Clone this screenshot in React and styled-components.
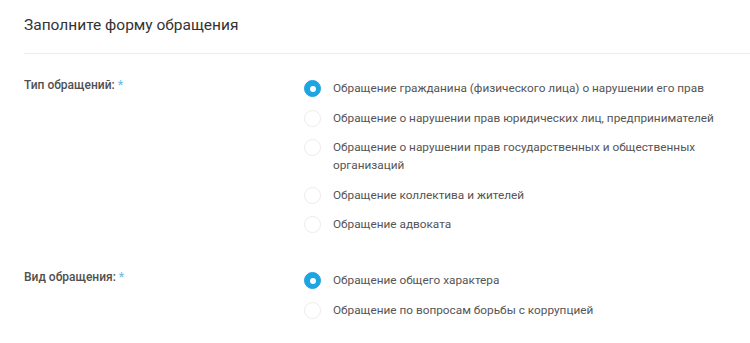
import React, { useState } from "react";
import styled, { createGlobalStyle } from "styled-components";

const GlobalStyle = createGlobalStyle`
  html, body {
    margin: 0;
    padding: 0;
    background: #fff;
  }
  body {
    font-family: Roboto, "Noto Sans", "Liberation Sans", sans-serif;
  }
`;

const groups = [
  {
    name: "type",
    label: "Тип обращений:",
    options: [
      "Обращение гражданина (физического лица) о нарушении его прав",
      "Обращение о нарушении прав юридических лиц, предпринимателей",
      "Обращение о нарушении прав государственных и общественных организаций",
      "Обращение коллектива и жителей",
      "Обращение адвоката",
    ],
  },
  {
    name: "kind",
    label: "Вид обращения:",
    options: [
      "Обращение общего характера",
      "Обращение по вопросам борьбы с коррупцией",
    ],
  },
];

export default function App() {
  const [values, setValues] = useState({ type: 0, kind: 0 });

  return (
    <>
      <GlobalStyle />
      <Page>
        <Header>
          <Title>Заполните форму обращения</Title>
        </Header>
        <Form>
          {groups.map((g) => (
            <Field key={g.name}>
              <Label>
                {g.label} <Required>*</Required>
              </Label>
              <Options>
                {g.options.map((opt, i) => (
                  <Option key={opt}>
                    <HiddenInput
                      type="radio"
                      name={g.name}
                      checked={values[g.name] === i}
                      onChange={() => setValues({ ...values, [g.name]: i })}
                    />
                    <Circle $checked={values[g.name] === i} />
                    <OptionText>{opt}</OptionText>
                  </Option>
                ))}
              </Options>
            </Field>
          ))}
        </Form>
      </Page>
    </>
  );
}

const Page = styled.div`
  width: 750px;
  padding-left: 24px;
  box-sizing: border-box;
`;

const Header = styled.div`
  height: 53px;
  border-bottom: 1px solid #ececec;
  display: flex;
  align-items: center;
`;

const Title = styled.h2`
  margin: 0 0 4px;
  font-size: 15.5px;
  font-weight: 400;
  color: #333;
`;

const Form = styled.div`
  display: flex;
  flex-direction: column;
  gap: 38px;
  padding-top: 25px;
`;

const Field = styled.div`
  display: grid;
  grid-template-columns: 280px 1fr;
`;

const Label = styled.div`
  font-size: 12px;
  font-weight: 500;
  color: #505050;
  line-height: 18px;
  margin-top: -3px;
`;

const Required = styled.span`
  color: #6cc0ea;
`;

const Options = styled.div`
  display: flex;
  flex-direction: column;
  gap: 11.5px;
`;

const Option = styled.label`
  display: flex;
  align-items: flex-start;
  gap: 12px;
  cursor: pointer;
`;

const HiddenInput = styled.input`
  position: absolute;
  opacity: 0;
  width: 0;
  height: 0;
`;

const Circle = styled.span`
  flex: none;
  box-sizing: border-box;
  width: 17px;
  height: 17px;
  border-radius: 50%;
  margin-top: 1px;
  background: ${(p) => (p.$checked ? "#1ba5e2" : "#fff")};
  border: 1px solid ${(p) => (p.$checked ? "#1ba5e2" : "#ececec")};
  display: flex;
  align-items: center;
  justify-content: center;
  &::after {
    content: "";
    width: 6px;
    height: 6px;
    border-radius: 50%;
    background: #fff;
    display: ${(p) => (p.$checked ? "block" : "none")};
  }
`;

const OptionText = styled.span`
  font-size: 11.8px;
  line-height: 18px;
  color: #555;
  max-width: 400px;
`;
